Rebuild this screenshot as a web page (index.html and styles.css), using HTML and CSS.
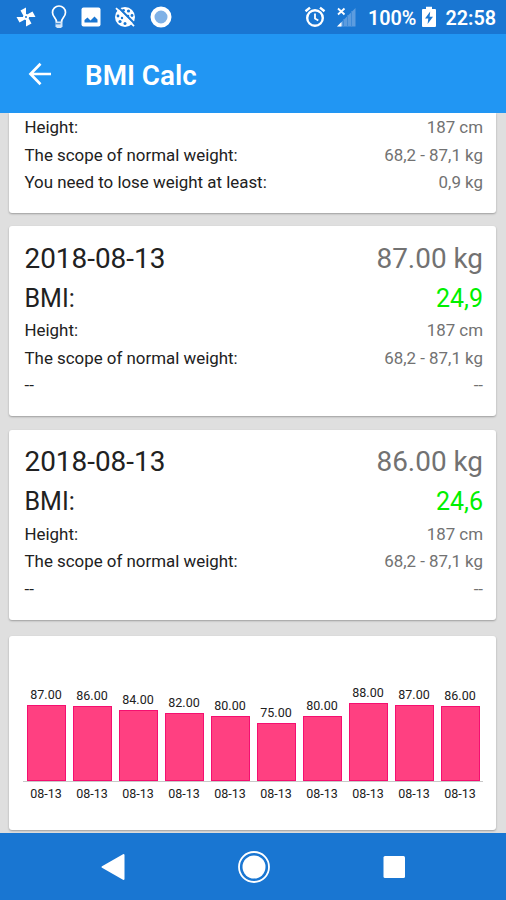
FILE: index.html
```html
<!DOCTYPE html>
<html lang="en">
<head>
  <meta charset="UTF-8">
  <meta name="viewport" content="width=device-width, initial-scale=1">
  <title>BMI Calc</title>
  <link rel="stylesheet" href="styles.css">
</head>
<body>

  <div class="status-bar">
    <div class="status-left">
      <svg width="22" height="22" viewBox="0 0 22 22" fill="#fff">
        <path d="M11 11V1.500L5.500 4.500 8 9ZM11 11H20.500L17.500 5.500 13 8ZM11 11V20.500L16.500 17.500 14 13ZM11 11H1.500L4.500 16.500 9 14Z"/>
        <circle cx="11" cy="11" r="3"/>
        <circle cx="11" cy="11" r="1" fill="#1976d2"/>
      </svg>
      <svg width="16" height="24" viewBox="0 0 16 24" fill="none" stroke="#fff" stroke-width="1.700">
        <path d="M5.500 17c0-4-4-5-4-9.500a6.500 6.500 0 0 1 13 0c0 4.500-4 5.500-4 9.500"/>
        <path d="M4.500 16.500h7v5L10 23H6l-1.500-1.500Z" fill="#d3e5f8" stroke="none"/>
        <path d="M4.500 18.800h5" stroke="#1976d2" stroke-width="1"/>
      </svg>
      <svg width="20" height="20" viewBox="0 0 20 20">
        <rect x=".5" y=".5" width="19" height="19" rx="2" fill="#fff"/>
        <path d="M3.500 15.500v-2.500l3-2.500 3 3 4-4 3 3v3Z" fill="#1976d2"/>
      </svg>
      <svg width="22" height="22" viewBox="0 0 22 22">
        <circle cx="11" cy="11" r="10" fill="#fff"/>
        <g fill="#1976d2">
          <circle cx="9.500" cy="4.300" r="1.400"/><circle cx="14.500" cy="5" r="1.600"/>
          <circle cx="18" cy="9.500" r="1.400"/><circle cx="4" cy="10" r="1.400"/>
          <circle cx="6" cy="15.500" r="1.600"/><circle cx="11" cy="17.500" r="1.500"/>
          <circle cx="14" cy="10" r="1.300"/><circle cx="8" cy="12" r="1.200"/>
        </g>
        <path d="M3.800.8 21.500 18.500" stroke="#1976d2" stroke-width="2"/>
        <path d="M2 2.200 20 20.200" stroke="#fff" stroke-width="1.800"/>
      </svg>
      <svg width="22" height="22" viewBox="0 0 22 22">
        <circle cx="11" cy="11" r="8.500" fill="#7fb1e6" stroke="#fff" stroke-width="4"/>
      </svg>
    </div>
    <div class="status-right">
      <svg width="22" height="22" viewBox="0 0 22 22" fill="none" stroke="#fff" stroke-width="2.400">
        <circle cx="11" cy="12" r="7.800"/>
        <path d="M11 7.500v5l3.300 2" stroke-width="1.800"/>
        <path d="m1.500 5.300 4.500-3.700M20.500 5.300 16 1.600"/>
      </svg>
      <svg class="signal" width="20" height="20" viewBox="0 0 20 20">
        <path d="M19.500 1v18.500H1Z" fill="#5c9cdf"/>
        <path d="M7.500 12v8M11.500 8v12M15.500 4v16" stroke="#3f8ad7"/>
        <path d="M1 19.500 5.500 15v4.500Z" fill="#fff"/>
        <path d="m2 1.500 6.500 6M8.500 1.500 2 7.500" stroke="#fff" stroke-width="1.800"/>
      </svg>
      <span>100%</span>
      <svg class="battery" width="14" height="22" viewBox="0 0 14 22">
        <path d="M1 3h3V.8h6V3h3q1 0 1 1v16q0 1-1 1H1q-1 0-1-1V4q0-1 1-1Z" fill="#fff"/>
        <path d="M8.200 5.500 3 12.500h3.300l-.7 5.500L11 10.800H7.600Z" fill="#1976d2"/>
      </svg>
      <span>22:58</span>
    </div>
  </div>

  <header class="app-bar">
    <svg width="24" height="24" viewBox="0 0 24 24" fill="none" stroke="#fff" stroke-width="2.700">
      <path d="M23 12H2.800M12.500 1.800 2.500 12 12.500 22.200"/>
    </svg>
    <h1>BMI Calc</h1>
  </header>

  <main class="content">
    <section class="card card-scrolled">
      <div class="row"><span>Height:</span><span class="value">187 cm</span></div>
      <div class="row"><span>The scope of normal weight:</span><span class="value">68,2 - 87,1 kg</span></div>
      <div class="row"><span>You need to lose weight at least:</span><span class="value">0,9 kg</span></div>
    </section>

    <section class="card">
      <div class="row row-date"><span>2018-08-13</span><span class="value">87.00 kg</span></div>
      <div class="row row-bmi"><span>BMI:</span><span class="value normal">24,9</span></div>
      <div class="row"><span>Height:</span><span class="value">187 cm</span></div>
      <div class="row"><span>The scope of normal weight:</span><span class="value">68,2 - 87,1 kg</span></div>
      <div class="row"><span>--</span><span class="value">--</span></div>
    </section>

    <section class="card">
      <div class="row row-date"><span>2018-08-13</span><span class="value">86.00 kg</span></div>
      <div class="row row-bmi"><span>BMI:</span><span class="value normal">24,6</span></div>
      <div class="row"><span>Height:</span><span class="value">187 cm</span></div>
      <div class="row"><span>The scope of normal weight:</span><span class="value">68,2 - 87,1 kg</span></div>
      <div class="row"><span>--</span><span class="value">--</span></div>
    </section>

    <section class="card card-chart">
      <div class="bars">
        <div class="col"><span>87.00</span><div class="bar" style="height: 76px"></div></div>
        <div class="col"><span>86.00</span><div class="bar" style="height: 74.5px"></div></div>
        <div class="col"><span>84.00</span><div class="bar" style="height: 71px"></div></div>
        <div class="col"><span>82.00</span><div class="bar" style="height: 68px"></div></div>
        <div class="col"><span>80.00</span><div class="bar" style="height: 65px"></div></div>
        <div class="col"><span>75.00</span><div class="bar" style="height: 57.5px"></div></div>
        <div class="col"><span>80.00</span><div class="bar" style="height: 65px"></div></div>
        <div class="col"><span>88.00</span><div class="bar" style="height: 77.5px"></div></div>
        <div class="col"><span>87.00</span><div class="bar" style="height: 76px"></div></div>
        <div class="col"><span>86.00</span><div class="bar" style="height: 74.5px"></div></div>
      </div>
      <div class="dates">
        <span>08-13</span><span>08-13</span><span>08-13</span><span>08-13</span><span>08-13</span>
        <span>08-13</span><span>08-13</span><span>08-13</span><span>08-13</span><span>08-13</span>
      </div>
    </section>
  </main>

  <nav class="nav-bar">
    <svg width="34" height="34" viewBox="0 0 34 34">
      <path d="M6.500 17 27.500 5v24Z" fill="#fff" stroke="#fff" stroke-width="2" stroke-linejoin="round"/>
    </svg>
    <svg width="34" height="34" viewBox="0 0 34 34">
      <circle cx="17" cy="17" r="15" fill="none" stroke="#fff" stroke-width="1.800"/>
      <circle cx="17" cy="17" r="11.500" fill="#fff"/>
    </svg>
    <svg width="34" height="34" viewBox="0 0 34 34">
      <rect x="6.500" y="6" width="21.500" height="22" rx="1.500" fill="#fff"/>
    </svg>
  </nav>

</body>
</html>
```
FILE: styles.css
```css
* {
  box-sizing: border-box;
}

body {
  margin: 0;
  height: 900px;
  display: flex;
  flex-direction: column;
  overflow: hidden;
  font-family: Roboto, "Liberation Sans", sans-serif;
  background: #dfdfdf;
  color: #212121;
}

svg {
  display: block;
  flex: none;
}

.status-bar {
  height: 34px;
  flex: none;
  display: flex;
  align-items: center;
  justify-content: space-between;
  padding: 0 10px 0 15px;
  background: #1976d2;
  color: #fff;
}

.status-left,
.status-right {
  display: flex;
  align-items: center;
}

.status-left {
  gap: 13.8px;
}

.status-right {
  font-size: 19.8px;
  font-weight: 600;
  line-height: 34px;
}

.status-right span {
  padding-top: 3px;
}

.signal {
  margin: 0 12px 0 10px;
}

.battery {
  margin: 0 9px 0 6px;
}

.app-bar {
  height: 79px;
  flex: none;
  display: flex;
  align-items: center;
  gap: 33px;
  padding: 0 28px;
  background: #2196f3;
  color: #fff;
}

.app-bar h1 {
  margin: 0;
  padding-top: 3px;
  font-size: 27.8px;
  font-weight: 600;
}

.content {
  flex: 1;
  min-height: 0;
  padding: 0 10px 0 9px;
  overflow: hidden;
}

.card {
  height: 190px;
  margin-bottom: 13.5px;
  padding: 12.5px 13px 0 15.5px;
  background: #fff;
  border-radius: 3px;
  box-shadow: 0 1px 2px rgba(0, 0, 0, 0.3);
}

.card-scrolled {
  height: 100px;
  margin-bottom: 13px;
  padding-top: 1px;
  border-radius: 0 0 3px 3px;
}

.row {
  display: flex;
  justify-content: space-between;
  font-size: 16.9px;
  line-height: 27.5px;
}

.row-date {
  font-size: 27.9px;
  line-height: 40px;
}

.row-bmi {
  font-size: 25px;
  line-height: 39px;
}

.row-bmi + .row {
  margin-top: -0.5px;
}

.value {
  color: #727272;
}

.normal {
  color: #00f000;
}

.card-chart {
  height: 194px;
  margin: 16px 0 0;
  padding: 0 13px 0 14px;
}

.bars {
  height: 146px;
  display: flex;
  align-items: flex-end;
  border-bottom: 1px solid #c8c8c8;
}

.col {
  flex: 1;
  display: flex;
  flex-direction: column;
  align-items: center;
  font-size: 12.5px;
  line-height: 20px;
}

.bar {
  width: 39px;
  background: #ff4081;
  border: 1px solid #f50f70;
}

.dates {
  display: flex;
  font-size: 12.5px;
  line-height: 24px;
}

.dates span {
  flex: 1;
  text-align: center;
}

.nav-bar {
  height: 67px;
  flex: none;
  display: flex;
  align-items: center;
  justify-content: space-between;
  padding: 0 95px 0 96px;
  background: #1976d2;
}
```
